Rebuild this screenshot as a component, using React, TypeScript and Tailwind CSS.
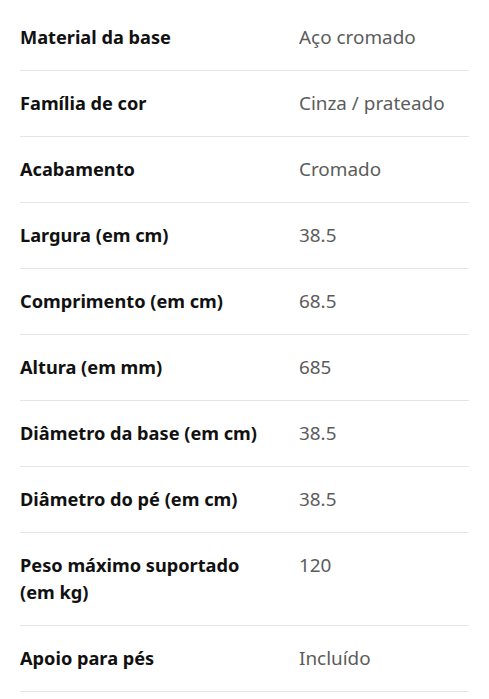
const specs = [
  ["Material da base", "Aço cromado"],
  ["Família de cor", "Cinza / prateado"],
  ["Acabamento", "Cromado"],
  ["Largura (em cm)", "38.5"],
  ["Comprimento (em cm)", "68.5"],
  ["Altura (em mm)", "685"],
  ["Diâmetro da base (em cm)", "38.5"],
  ["Diâmetro do pé (em cm)", "38.5"],
  ["Peso máximo suportado (em kg)", "120"],
  ["Apoio para pés", "Incluído"],
];

export default function App() {
  return (
    <div className="min-h-screen w-full bg-white pt-[5px] px-[20px]" style={{ fontFamily: '"Noto Sans", sans-serif' }}>
      {specs.map(([label, value], i) => (
        <div key={i} className="grid grid-cols-[245px_1fr] gap-x-[34px] py-[19px] border-b border-[#e5e5e5] leading-[27px]">
          <div className="font-bold text-[18.2px] text-[#111111]">{label}</div>
          <div className="text-[18.9px] text-[#5c5c5c]">{value}</div>
        </div>
      ))}
    </div>
  );
}
